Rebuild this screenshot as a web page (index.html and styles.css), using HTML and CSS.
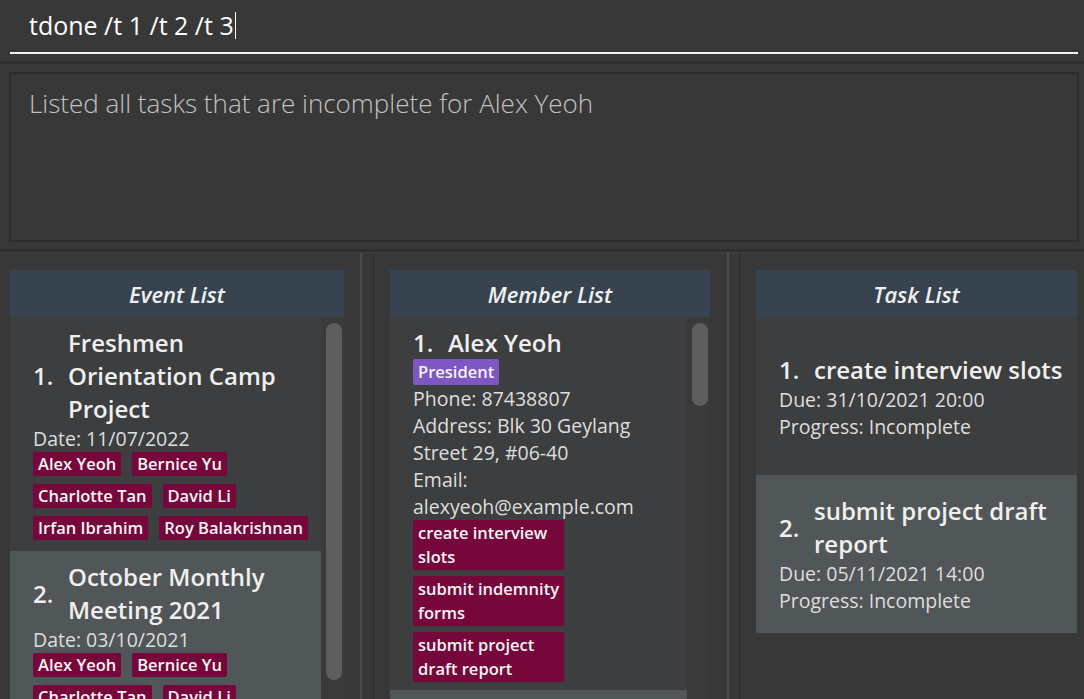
FILE: index.html
```html
<!DOCTYPE html>
<html>
<head>
<meta charset="utf-8">
<link rel="stylesheet" href="styles.css">
</head>
<body>
<div class="app">
  <div class="command">
    <div class="cmd-input"><span class="cmd-text">tdone /t 1 /t 2 /t 3</span><span class="caret"></span></div>
  </div>
  <div class="sep"></div>
  <div class="result-wrap">
    <div class="result">Listed all tasks that are incomplete for Alex Yeoh</div>
  </div>
  <div class="sep"></div>
  <div class="panels">
    <section class="col col-event">
      <div class="header h-event">Event List</div>
      <div class="list">
        <div class="cards cards-event">
          <div class="card even ev-card">
            <div class="title-row"><span class="num">1.</span><span class="name">Freshmen Orientation Camp Project</span></div>
            <div class="detail">Date: 11/07/2022</div>
            <div class="tags">
              <span class="tag">Alex Yeoh</span><span class="tag">Bernice Yu</span>
              <span class="tag">Charlotte Tan</span><span class="tag">David Li</span>
              <span class="tag">Irfan Ibrahim</span><span class="tag">Roy Balakrishnan</span>
            </div>
          </div>
          <div class="card odd ev-card">
            <div class="title-row"><span class="num">2.</span><span class="name">October Monthly Meeting 2021</span></div>
            <div class="detail">Date: 03/10/2021</div>
            <div class="tags">
              <span class="tag">Alex Yeoh</span><span class="tag">Bernice Yu</span>
              <span class="tag">Charlotte Tan</span><span class="tag">David Li</span>
            </div>
          </div>
        </div>
        <div class="scrollbar"><div class="thumb thumb-event"></div></div>
      </div>
    </section>
    <div class="divider"></div>
    <section class="col col-member">
      <div class="header h-member">Member List</div>
      <div class="list">
        <div class="cards cards-member">
          <div class="card even mem-card">
            <div class="title-row"><span class="num">1.</span><span class="name">Alex Yeoh</span></div>
            <div class="roles"><span class="role">President</span></div>
            <div class="detail">Phone: 87438807</div>
            <div class="detail">Address: Blk 30 Geylang Street 29, #06-40</div>
            <div class="detail">Email: alexyeoh@example.com</div>
            <div class="task-tags">
              <span class="tag task-tag">create interview slots</span>
              <span class="tag task-tag">submit indemnity forms</span>
              <span class="tag task-tag">submit project draft report</span>
            </div>
          </div>
          <div class="card odd mem-card"></div>
        </div>
        <div class="scrollbar"><div class="thumb thumb-member"></div></div>
      </div>
    </section>
    <div class="divider divider-2"></div>
    <section class="col col-task">
      <div class="header h-task">Task List</div>
      <div class="list">
        <div class="cards cards-task">
          <div class="card even task-card">
            <div class="title-row"><span class="num">1.</span><span class="name">create interview slots</span></div>
            <div class="detail">Due: 31/10/2021 20:00</div>
            <div class="detail">Progress: Incomplete</div>
          </div>
          <div class="card odd task-card">
            <div class="title-row"><span class="num">2.</span><span class="name">submit project draft report</span></div>
            <div class="detail">Due: 05/11/2021 14:00</div>
            <div class="detail">Progress: Incomplete</div>
          </div>
        </div>
      </div>
    </section>
  </div>
</div>
</body>
</html>
```
FILE: styles.css
```css
html, body {
  margin: 0;
  padding: 0;
  background: #383838;
  width: 1084px;
  height: 699px;
  overflow: hidden;
  font-family: "Open Sans", "Liberation Sans", sans-serif;
}

.app {
  display: flex;
  flex-direction: column;
  height: 699px;
}

.command {
  height: 61px;
  padding: 0 6px 0 10px;
  box-sizing: border-box;
}

.cmd-input {
  height: 54px;
  box-sizing: border-box;
  border-bottom: 2px solid #f4f4f4;
  padding-left: 19px;
  display: flex;
  align-items: center;
  padding-bottom: 2px;
}

.cmd-text {
  color: #ffffff;
  font-size: 25px;
  line-height: 32px;
  font-weight: 400;
}

.caret {
  width: 1px;
  height: 27px;
  background: #ffffff;
  margin-left: 1px;
}

.sep {
  height: 3px;
  background: #2e2e2e;
  flex: none;
}

.result-wrap {
  padding: 8px 5px 7px 9px;
  flex: none;
}

.result {
  height: 170px;
  box-sizing: border-box;
  border: 2px solid #2d2d2d;
  padding: 12px 18px;
  color: #c2c2c2;
  font-size: 26px;
  line-height: 34px;
  font-weight: 300;
}

.panels {
  flex: 1;
  display: flex;
  min-height: 0;
  border-top: 1px solid #414141;
}

.col {
  display: flex;
  flex-direction: column;
  padding-top: 17px;
  box-sizing: border-box;
  overflow: hidden;
}

.col-event {
  width: 362px;
  padding-left: 10px;
  border-right: 2px solid #4b4b4b;
}

.divider {
  width: 11px;
  flex: none;
}

.divider-2 {
  width: 10px;
}

.col-member {
  width: 356px;
  padding-left: 16px;
  border-left: 1px solid #2c2c2c;
  border-right: 2px solid #4b4b4b;
}

.col-task {
  flex: 1;
  padding-left: 16px;
  border-left: 1px solid #2c2c2c;
}

.header {
  height: 47px;
  flex: none;
  background: #37444f;
  color: #f0f0f0;
  font-style: italic;
  font-weight: 600;
  font-size: 22px;
  display: flex;
  align-items: center;
  justify-content: center;
}

.h-event { width: 334px; }
.h-member { width: 320px; }
.h-task { width: 321px; }

.list {
  display: flex;
  flex: 1;
  min-height: 0;
}

.cards {
  display: flex;
  flex-direction: column;
}

.cards-event { width: 311px; }
.cards-member { width: 297px; }
.cards-task { width: 321px; }

.scrollbar {
  width: 23px;
  flex: none;
  background: #3a3a3a;
  padding: 6px 2px 0 5px;
  box-sizing: border-box;
}

.thumb {
  width: 16px;
  background: #5e5e5e;
  border-radius: 8px;
}

.thumb-event { height: 357px; }
.thumb-member { height: 83px; }

.card {
  box-sizing: border-box;
  flex: none;
}

.even { background: #3c3e3f; }
.odd { background: #515658; flex: 1; }

.ev-card {
  padding: 9px 10px 11px 23px;
}

.mem-card {
  padding: 9px 4px 8px 23px;
}

.task-card {
  height: 158px;
  padding: 0 10px 0 23px;
  display: flex;
  flex-direction: column;
  justify-content: center;
}

.cards-task .odd { flex: none; }

.title-row {
  display: flex;
  align-items: center;
  color: #efefef;
  font-size: 24px;
  font-weight: 600;
  line-height: 33px;
}

.num {
  width: 35px;
  flex: none;
}

.name {
  flex: 1;
}

.detail {
  color: #dedede;
  font-size: 19.5px;
  line-height: 27px;
}

.tags {
  display: flex;
  flex-wrap: wrap;
  gap: 8px 11px;
}

.tag {
  background: #76073a;
  color: #f4f4f4;
  font-size: 16.5px;
  font-weight: 600;
  line-height: 24px;
  padding: 0 5px;
  border-radius: 2px;
}

.roles {
  display: flex;
}

.role {
  background: #7e57c2;
  color: #f4f4f4;
  font-size: 16.5px;
  font-weight: 600;
  line-height: 24px;
  padding: 1px 5px;
  border-radius: 2px;
}

.task-tags {
  display: flex;
  flex-direction: column;
  align-items: flex-start;
  gap: 6px;
}

.task-tag {
  width: 151px;
  box-sizing: border-box;
  padding: 1px 2px 1px 5px;
}
```
